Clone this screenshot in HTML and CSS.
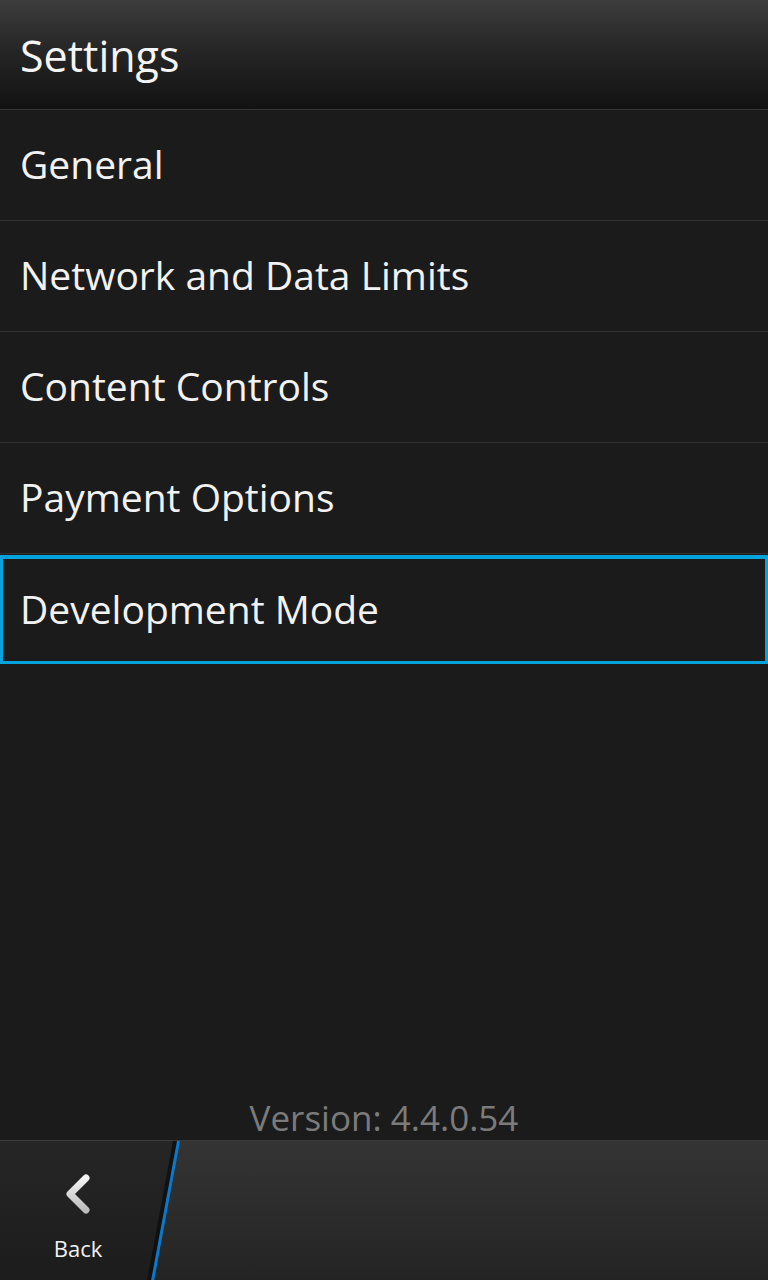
FILE: index.html
```html
<!DOCTYPE html>
<html lang="en">
  <head>
    <meta charset="UTF-8" />
    <meta name="viewport" content="width=device-width, initial-scale=1.0" />
    <title>Settings</title>
    <link rel="stylesheet" href="styles.css">
  </head>
  <body>
    <header class="title-bar">
      <h1>Settings</h1>
    </header>

    <ul class="menu">
      <li class="menu-item">General</li>
      <li class="menu-item">Network and Data Limits</li>
      <li class="menu-item">Content Controls</li>
      <li class="menu-item">Payment Options</li>
      <li class="menu-item selected">Development Mode</li>
    </ul>

    <div class="version">Version: 4.4.0.54</div>

    <footer class="action-bar">
      <a class="back" href="#">
        <svg class="back-icon" width="28" height="42" viewBox="0 0 28 42">
          <defs>
            <linearGradient id="chev" x1="0" y1="0" x2="0" y2="1">
              <stop offset="0" stop-color="#f4f4f4" />
              <stop offset="1" stop-color="#bdbdbd" />
            </linearGradient>
          </defs>
          <path d="M22 5 L6 21 L22 37" fill="none" stroke="url(#chev)" stroke-width="7" stroke-linecap="round" stroke-linejoin="round" />
        </svg>
        <span>Back</span>
      </a>
      <!-- slanted separator between back and the rest of the bar -->
      <svg class="divider" width="40" height="140" viewBox="0 0 40 140">
        <polygon points="26,0 31,0 5,140 0,140" fill="#0c0c0c" opacity="0.8" />
        <line x1="31.5" y1="0" x2="5.5" y2="140" stroke="#0a78cc" stroke-width="3" />
      </svg>
    </footer>
  </body>
</html>
```

FILE: styles.css
```css
* {
  box-sizing: border-box;
}

html,
body {
  height: 100%;
}

body {
  margin: 0;
  padding: 0;
  font-family: "Open Sans", "Noto Sans", sans-serif;
  background-color: #1b1b1b;
  color: #f2f2f2;
  display: flex;
  flex-direction: column;
  overflow: hidden;
}

.title-bar {
  height: 110px;
  flex-shrink: 0;
  background: linear-gradient(to bottom, #3d3d3d 0%, #262626 45%, #121212 100%);
  border-bottom: 1px solid #343434;
  padding-left: 20px;
  display: flex;
  align-items: center;
}

.title-bar h1 {
  margin: 0;
  font-size: 43px;
  font-weight: normal;
  color: #f4f4f4;
  line-height: 1;
  padding-bottom: 0;
  padding-top: 2px;
}

.menu {
  list-style: none;
  margin: 0;
  padding: 0;
}

.menu-item {
  height: 111px;
  border-bottom: 1px solid #303030;
  padding-left: 20px;
  font-size: 39px;
  line-height: 108px;
  color: #f2f2f2;
}

.menu-item.selected {
  border: 3px solid #04a3db;
  border-top-width: 4px;
  margin-top: 1px;
  height: 109px;
  padding-left: 17px;
  line-height: 100px;
}

.version {
  margin-top: auto;
  text-align: center;
  font-size: 35px;
  color: #7b7b7b;
  line-height: 1;
  padding-bottom: 5px;
}

.action-bar {
  height: 140px;
  flex-shrink: 0;
  border-top: 1px solid #3a3a3a;
  display: flex;
  position: relative;
  background: linear-gradient(to bottom, #343434, #242424);
}

.back {
  width: 180px;
  padding-right: 24px;
  display: flex;
  flex-direction: column;
  align-items: center;
  padding-top: 32px;
  gap: 22px;
  text-decoration: none;
  color: #f2f2f2;
  font-size: 22px;
  background: linear-gradient(to bottom, #262626, #1c1c1c);
  clip-path: polygon(0 0, 179px 0, 153px 100%, 0 100%);
}

.back span {
  line-height: 1;
}

.divider {
  position: absolute;
  left: 147px;
  top: 0;
}
```
